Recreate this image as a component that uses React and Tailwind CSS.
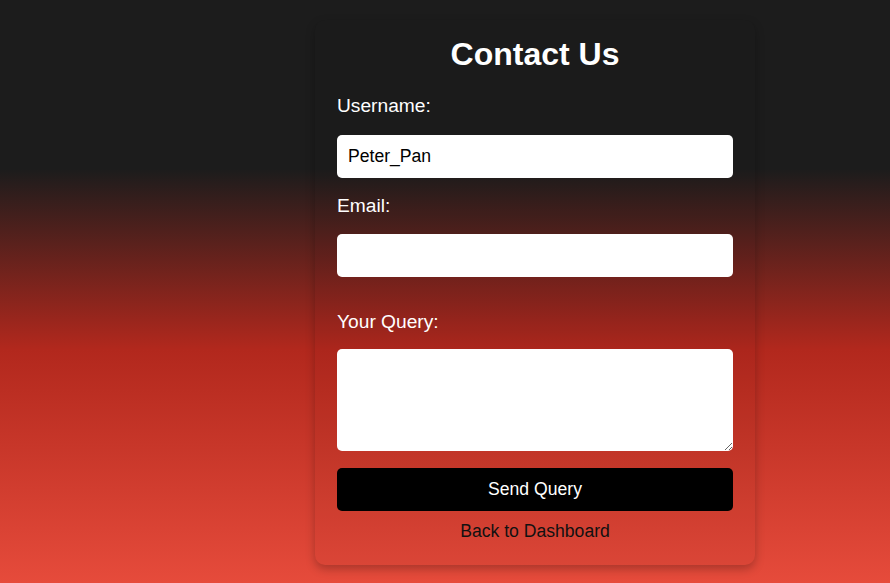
export default function App() {
  return (
    <div
      className="flex min-h-screen w-full justify-center bg-[linear-gradient(to_bottom,#1c1c1c_29%,#b2281d_60%,#e64b3b_100%)] pt-[20px] font-['Liberation_Sans',Arial,sans-serif]"
    >
      <div className="w-[180px] shrink-0" />
      <div className="h-fit w-[440px] shrink-0 rounded-[10px] bg-black/[0.03] px-[22px] pt-[16px] pb-[23px] shadow-[0_4px_10px_rgba(0,0,0,0.25)]">
        <h2 className="h-[37px] text-center text-[32px] font-bold leading-[37px] text-white">
          Contact Us
        </h2>
        <form className="flex flex-col" onSubmit={(e) => e.preventDefault()}>
          <label className="mt-[22px] block text-[19.2px] leading-[22px] text-white">
            Username:
          </label>
          <input
            type="text"
            defaultValue="Peter_Pan"
            className="mt-[18px] h-[43px] w-full rounded-[5px] bg-white px-[11px] text-[17.6px] text-black outline-none"
          />
          <label className="mt-[17px] block text-[19.2px] leading-[22px] text-white">
            Email:
          </label>
          <input
            type="email"
            className="mt-[17px] h-[43px] w-full rounded-[5px] bg-white px-[11px] text-[17.6px] text-black outline-none"
          />
          <label className="mt-[34px] block text-[19.2px] leading-[22px] text-white">
            Your Query:
          </label>
          <textarea className="mt-[16px] block h-[102px] w-full rounded-[5px] bg-white px-[11px] py-[8px] text-[17.6px] text-black outline-none" />
          <button
            type="submit"
            className="mt-[17px] h-[43px] w-full rounded-[5px] bg-black text-[17.6px] text-white"
          >
            Send Query
          </button>
          <a
            href="#"
            className="mt-[9px] block text-center text-[17.6px] leading-[22px] text-[#111]"
          >
            Back to Dashboard
          </a>
        </form>
      </div>
    </div>
  );
}
